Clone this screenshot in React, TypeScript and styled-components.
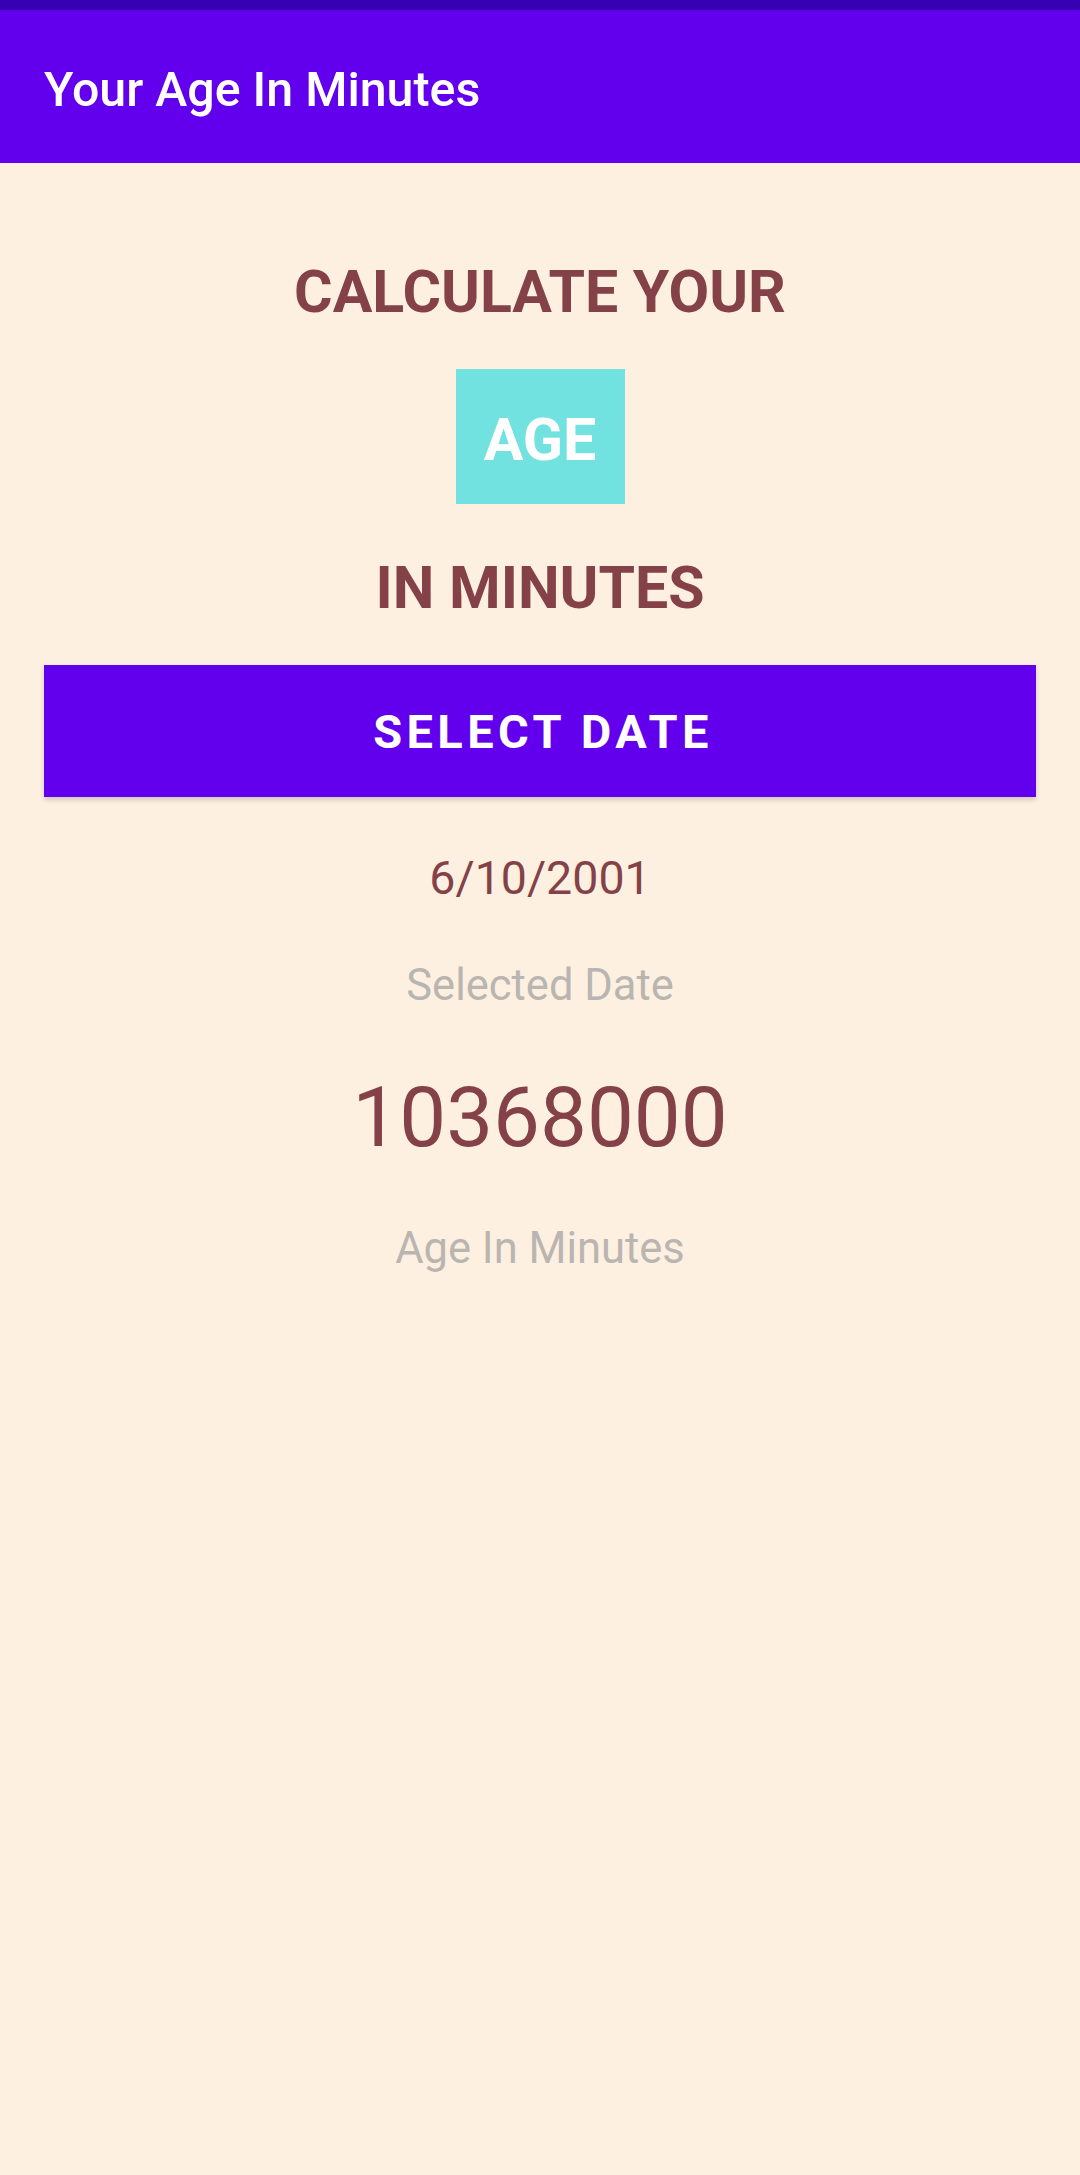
import React from "react";
import styled, { createGlobalStyle } from "styled-components";

const Global = createGlobalStyle`
  html, body {
    margin: 0;
    padding: 0;
    background: #fef0e1;
  }
  body {
    font-family: Roboto, "Noto Sans", sans-serif;
  }
  * { box-sizing: border-box; }
`;

const Screen = styled.div`
  width: 1080px;
  min-height: 2175px;
  background: #fef0e1;
  display: flex;
  flex-direction: column;
`;

const StatusBar = styled.div`
  height: 10px;
  background: #3700b3;
`;

const AppBar = styled.header`
  height: 153px;
  background: #6200ee;
  display: flex;
  align-items: center;
  padding: 6px 44px 0;
`;

const AppTitle = styled.h1`
  margin: 0;
  font-size: 48.3px;
  font-weight: 500;
  color: #ffffff;
  line-height: normal;
`;

const Content = styled.main`
  display: flex;
  flex-direction: column;
  align-items: center;
  padding: 0 44px;
`;

const Heading = styled.div<{ $mt: number }>`
  margin-top: ${(p) => p.$mt}px;
  font-size: 59px;
  font-weight: 700;
  color: #844248;
  line-height: normal;
  text-align: center;
`;

const AgeBox = styled.div`
  margin-top: 43px;
  width: 169px;
  height: 135px;
  background: #72e2e0;
  color: #ffffff;
  font-size: 59px;
  font-weight: 700;
  display: flex;
  align-items: center;
  justify-content: center;
  padding-top: 6px;
`;

const SelectButton = styled.button`
  margin-top: 43px;
  width: 100%;
  height: 132px;
  border: none;
  background: #6200ee;
  color: #ffffff;
  font-family: Roboto, "Noto Sans", sans-serif;
  font-size: 47px;
  font-weight: 700;
  letter-spacing: 4.4px;
  text-transform: uppercase;
  box-shadow: 0 3px 5px rgba(0, 0, 0, 0.16);
  padding: 0 0 0 6px;
  cursor: pointer;
`;

const Value = styled.div<{ $mt: number; $size: number }>`
  margin-top: ${(p) => p.$mt}px;
  font-size: ${(p) => p.$size}px;
  font-weight: 400;
  color: #844248;
  line-height: normal;
`;

const Caption = styled.div<{ $mt: number }>`
  margin-top: ${(p) => p.$mt}px;
  font-size: 43.5px;
  font-weight: 400;
  color: #b9b6b2;
  line-height: normal;
`;

export default function App() {
  return (
    <Screen>
      <Global />
      <StatusBar />
      <AppBar>
        <AppTitle>Your Age In Minutes</AppTitle>
      </AppBar>
      <Content>
        <Heading $mt={94}>CALCULATE YOUR</Heading>
        <AgeBox>AGE</AgeBox>
        <Heading $mt={49}>IN MINUTES</Heading>
        <SelectButton>Select Date</SelectButton>
        <Value $mt={54} $size={46.5}>6/10/2001</Value>
        <Caption $mt={54.5}>Selected Date</Caption>
        <Value $mt={58.5} $size={83.5}>10368000</Value>
        <Caption $mt={57}>Age In Minutes</Caption>
      </Content>
    </Screen>
  );
}
